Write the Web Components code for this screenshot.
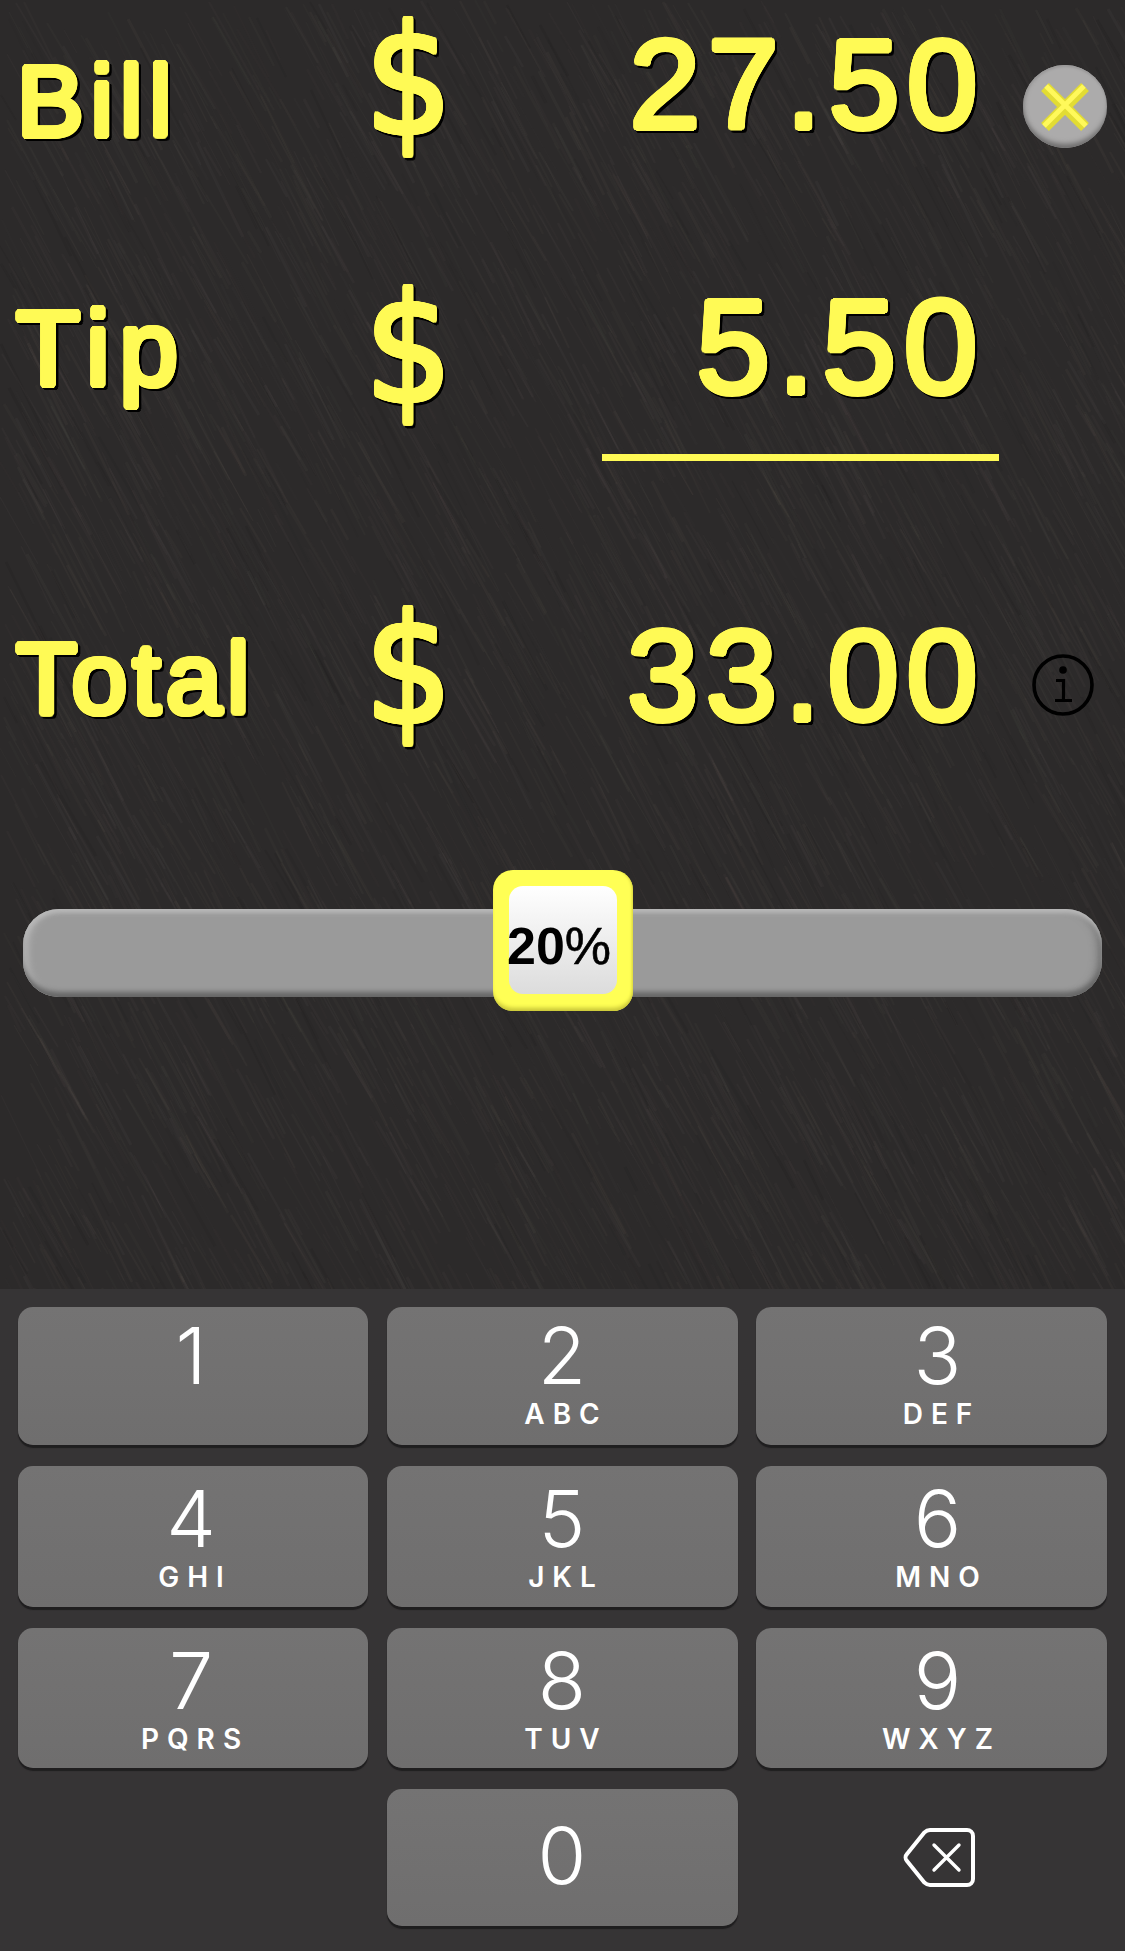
<!DOCTYPE html>
<html><head><meta charset="utf-8"><title>Tip</title>
<style>html,body{margin:0;padding:0;background:#2d2b2b}body{width:1125px;height:1951px;overflow:hidden}</style>
</head><body>
<tip-app>
  <tip-stage>
    <money-row label="Bill" value="27.50" h="270" f="100" ls="7" lt="51" dt="6" vf="127" vt="21" lx="17"><round-close slot="aside"></round-close></money-row>
    <money-row label="Tip" value="5.50" h="184" f="105" ls="10" lt="26" dt="4" vf="133" vt="11" lx="16"></money-row>
    <sum-rule></sum-rule>
    <money-row label="Total" value="33.00" h="200" f="100" ls="5.5" lt="167" dt="134" vf="128" vt="151" lx="16"></money-row>
    <tip-slider percent="20"></tip-slider>
  </tip-stage>
  <num-pad>
    <num-key d="1" t="20" pr="4"></num-key><num-key d="2" l="ABC" t="20"></num-key><num-key d="3" l="DEF" t="20" pl="12"></num-key>
    <num-key d="4" l="GHI" pr="4"></num-key><num-key d="5" l="JKL"></num-key><num-key d="6" l="MNO" pl="12"></num-key>
    <num-key d="7" l="PQRS" pr="4"></num-key><num-key d="8" l="TUV"></num-key><num-key d="9" l="WXYZ" pl="12"></num-key>
    <span></span><num-key d="0" t="38"></num-key><back-key></back-key>
  </num-pad>
</tip-app>
<script>
function ring(r,c,dx,dy,n){let o=[];for(let i=0;i<n;i++){const a=i/n*Math.PI*2;o.push(`${(dx+r*Math.cos(a)).toFixed(2)}px ${(dy+r*Math.sin(a)).toFixed(2)}px 0 ${c}`)}return o}
function glow(r){return [...ring(r,'#fffa55',0,0,16),...ring(r,'#000',2.4,2.4,12)].join(',')}
function texture(){let s=12345;const rnd=()=>(s=(s*1664525+1013904223)%4294967296)/4294967296;
  let l='';for(let i=0;i<4500;i++){const x=rnd()*1125,y=rnd()*1289,len=25+rnd()*90,w=1+rnd()*2.2,lt=rnd()<.88,op=(.03+rnd()*.07).toFixed(3),ang=1.03+rnd()*.1;
    l+=`<line x1="${x.toFixed(0)}" y1="${y.toFixed(0)}" x2="${(x+len*Math.cos(ang)).toFixed(0)}" y2="${(y+len*Math.sin(ang)).toFixed(0)}" stroke="${lt?'#6b625c':'#111'}" stroke-opacity="${op}" stroke-width="${w.toFixed(1)}"/>`}
  return 'data:image/svg+xml,'+encodeURIComponent(`<svg xmlns="http://www.w3.org/2000/svg" width="1125" height="1289">${l}</svg>`)}
function el(name,css,html){customElements.define(name,class extends HTMLElement{connectedCallback(){if(this.shadowRoot)return;const r=this.attachShadow({mode:'open'});const a=k=>this.getAttribute(k);r.innerHTML=`<style>${typeof css=='function'?css(a):css}</style>`+(typeof html=='function'?html(a):html);}})}
el('tip-app',':host{display:flex;flex-direction:column;width:1125px;height:1951px}','<slot></slot>');
el('tip-stage',()=>`:host{display:block;height:1289px;background:#2c2a2a url("${texture()}");box-sizing:border-box}`,'<slot></slot>');
el('money-row',a=>`:host{display:flex;align-items:flex-start;height:${a('h')}px;color:#fffa55;font-family:"Liberation Sans",Arial,sans-serif}
 .l{width:${369-a('lx')}px;margin:${a('lt')}px 0 0 ${a('lx')}px;font-size:${a('f')}px;line-height:1;letter-spacing:${a('ls')}px;text-shadow:${glow(3)}}
 .d{width:86px;margin-top:${a('dt')}px;font:151px/1 "DejaVu Sans",sans-serif;text-shadow:${glow(2.2)}}
 .d span{display:inline-block;transform:translateX(-8.5px) scaleX(.91)}
 .v{width:530px;text-align:right;margin-top:${a('vt')}px;font-size:${a('vf')}px;line-height:1;letter-spacing:7.5px;text-shadow:${glow(2.6)}}
 ::slotted(*){margin:65px 0 0 38px}
 svg{display:block;flex:none;margin:193px 0 0 46px}`,
 a=>`<div class="l">${a('label')}</div><div class="d"><span>$</span></div><div class="v">${a('value')}</div><slot name="aside">${a('label')=='Total'?`<svg width="64" height="62" viewBox="0 0 64 62" fill="none" stroke="#000"><circle cx="32" cy="31" r="29" stroke-width="3.6"/><circle cx="32" cy="16" r="3.8" fill="#000" stroke="none"/><path d="M25 26.5h7.5V46M24 46.5h17" stroke-width="3.2"/></svg>`:''}</slot>`);
el('round-close',`:host{display:flex;align-items:center;justify-content:center;width:84px;height:83px;border-radius:50%;background:#acabab;box-shadow:inset 0 -6px 5px -2px #6f6e6e,inset 0 2px 2px #9b9a9a,inset 3px 0 4px -2px #8f8e8e}svg{display:block}`,
 `<svg width="48" height="48" viewBox="0 0 48 48"><path d="M4 4L44 44M44 4L4 44" stroke="#e2dc34" stroke-width="11"/><path d="M5 3L45 43M43 3L3 43" stroke="#fff95a" stroke-width="5"/></svg>`);
el('sum-rule',':host{display:block;width:397px;height:7px;margin-left:602px;background:#fffa55}','');
el('tip-slider',a=>`:host{display:block;position:relative;width:1079px;height:88px;margin:248px 0 0 23px;border-radius:36px;background:#9a9a9a;box-shadow:inset 0 5px 4px -1px #b8b8b8,inset 0 -6px 5px -1px #666,inset 7px 0 8px -3px #c0c0c0,inset -7px 0 8px -3px #707070}
 .t{position:absolute;left:470px;top:-39px;width:140px;height:141px;box-sizing:border-box;padding:16px;border-radius:20px;background:#ffff55;box-shadow:inset 0 -5px 4px -2px #c8c538,inset -3px 0 3px -2px #d8d540}
 .i{height:108px;border-radius:14px;background:linear-gradient(#fff,#dcdcdc);font:700 52px/1 "Liberation Sans",Arial,sans-serif;color:#000;white-space:nowrap;padding-top:34px;box-sizing:border-box;text-indent:-2px}
 .p{font-weight:400;-webkit-text-stroke:.6px #000}`,a=>`<div class="t"><div class="i">${a('percent')}<span class="p">%</span></div></div>`);
el('num-pad',`:host{display:grid;grid-template-columns:350px 351px 351px;column-gap:18.5px;grid-template-rows:138px 141px 140px 137px;row-gap:21px;padding:18px 18px 0;height:662px;box-sizing:border-box;background:#363435;align-content:start}`,'<slot></slot>');
el('num-key',a=>`:host{display:flex;flex-direction:column;align-items:center;border-radius:15px;background:linear-gradient(#747373,#6f6e6e);box-shadow:0 3px 1px #1f1e1f;color:#fff;font-family:Inter,"Liberation Sans",sans-serif;box-sizing:border-box;padding-left:${a('pl')||0}px;padding-right:${a('pr')||0}px}
 .d{font-size:79px;font-weight:300;line-height:56px;margin-top:${a('t')||24}px}.l{font-size:28px;font-weight:600;letter-spacing:8px;line-height:28px;margin:17px 0 0 8px}`,
 a=>`<div class="d">${a('d')}</div>${a('l')?`<div class="l">${a('l')}</div>`:''}`);
el('back-key',`:host{display:flex;align-items:center;justify-content:center;padding-left:16px}svg{display:block}`,
 `<svg width="73" height="61" viewBox="0 0 73 61" fill="none" stroke="#fff" stroke-width="4" stroke-linejoin="round" stroke-linecap="round"><path d="M27 3H64a6 6 0 0 1 6 6V52a6 6 0 0 1-6 6H27a8 8 0 0 1-5.5-2.3L4 34a5 5 0 0 1 0-7L21.5 5.3A8 8 0 0 1 27 3z"/><path d="M31 18L56 43M56 18L31 43" stroke-width="3.4"/></svg>`);
</script>
</body></html>
